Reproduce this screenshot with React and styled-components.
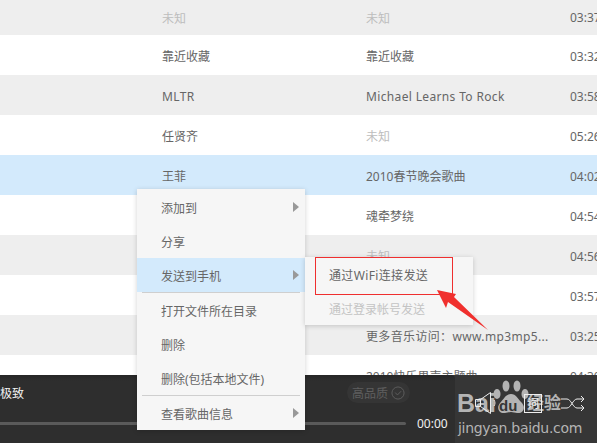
import React from 'react'
import styled, { createGlobalStyle } from 'styled-components'

const GlobalStyle = createGlobalStyle`
  html, body {
    margin: 0;
    padding: 0;
    background: #fff;
  }
`

const Page = styled.div`
  width: 597px;
  height: 443px;
  position: relative;
  overflow: hidden;
  display: flex;
  flex-direction: column;
  font-family: "Noto Sans", "Noto Sans CJK SC", sans-serif;
  font-size: 12px;
`

const SongList = styled.div`
  height: 375px;
  overflow: hidden;
  flex-shrink: 0;
`

const Row = styled.div`
  height: 40px;
  padding-top: 2px;
  box-sizing: border-box;
  display: grid;
  grid-template-columns: 162px 204px 204px 60px;
  align-items: center;
  color: #666;
  white-space: nowrap;
  background: ${props => props.selected ? '#d3eafc' : props.even ? '#eeeeee' : '#ffffff'};
  &:first-child {
    height: 35px;
    padding-top: 0;
  }
`

const Cell = styled.div`
  grid-column: ${props => props.col};
  color: ${props => props.unknown ? '#bdbdbd' : 'inherit'};
  letter-spacing: ${props => props.wide ? '0.35px' : 'normal'};
`

const Player = styled.div`
  flex: 1;
  display: flex;
  background: #363636;
`

const PlayerMain = styled.div`
  width: 455px;
  flex-shrink: 0;
  display: flex;
  flex-direction: column;
  background: linear-gradient(#262626, #2e2e2e 6px);
  border-radius: 0 4px 0 0;
  padding-top: 7px;
  box-sizing: border-box;
`

const TitleRow = styled.div`
  height: 21px;
  display: flex;
  align-items: center;
  justify-content: space-between;
  padding-right: 45px;
  color: #f2f2f2;
`

const QualityPill = styled.div`
  width: 63px;
  height: 21px;
  border-radius: 11px;
  background: #353535;
  color: #5f5f5f;
  display: flex;
  align-items: center;
  justify-content: center;
  gap: 3px;
  box-sizing: border-box;
`

const ProgressRow = styled.div`
  margin-top: 10px;
  height: 20px;
  display: flex;
  align-items: center;
  gap: 11px;
  color: #f0f0f0;
`

const ProgressBar = styled.div`
  width: 406px;
  height: 3px;
  background: #5a5a5a;
  border-radius: 0 2px 2px 0;
`

const PlayerControls = styled.div`
  flex: 1;
  display: flex;
  align-items: center;
  padding: 0 12px 12px 20px;
  justify-content: space-between;
  position: relative;
  z-index: 1;
`

const LyricButton = styled.div`
  width: 16px;
  height: 17px;
  border: 1px solid #eee;
  color: #eee;
  font-size: 12px;
  line-height: 17px;
  text-align: center;
  margin-left: 6px;
`

const ContextMenu = styled.div`
  position: absolute;
  left: ${props => props.x}px;
  top: ${props => props.y}px;
  width: 168px;
  padding: ${props => props.sub ? 0 : '1px'} 0 0;
  background: #f6f6f6;
  box-shadow: 0 1px 5px rgba(0, 0, 0, 0.18);
  box-sizing: border-box;
  z-index: 2;
`

const MenuItem = styled.div`
  height: 34px;
  display: flex;
  align-items: center;
  justify-content: space-between;
  padding: 2px 6px 0 24px;
  box-sizing: border-box;
  color: ${props => props.disabled ? '#c4c4c4' : '#666'};
  background: ${props => props.active ? '#d3eafc' : 'transparent'};
  letter-spacing: ${props => props.wide ? '0.35px' : 'normal'};
  white-space: nowrap;
`

const Arrow = styled.span`
  width: 0;
  height: 0;
  margin-top: -2px;
  border-left: 6px solid #999;
  border-top: 5px solid transparent;
  border-bottom: 5px solid transparent;
`

const Separator = styled.div`
  height: 1px;
  margin: 0 5px;
  background: #cfcfcf;
`

const RedFrame = styled.div`
  position: absolute;
  left: 315px;
  top: 257px;
  width: 136px;
  height: 36px;
  border: 1px solid #ef2f2f;
  z-index: 3;
`

const RedArrow = styled.svg`
  position: absolute;
  left: 430px;
  top: 285px;
  z-index: 3;
`

const Watermark = styled.div`
  position: absolute;
  left: 457px;
  top: 380px;
  width: 112px;
  height: 58px;
  color: #b4b4b4;
`

const WatermarkBai = styled.span`
  position: absolute;
  left: 0;
  top: 8px;
  font: bold 25px/30px "Liberation Sans", sans-serif;
`

const WatermarkDu = styled.span`
  position: absolute;
  left: 42px;
  top: 17px;
  font: bold 15px/18px "Liberation Sans", sans-serif;
  color: #363636;
`

const WatermarkCn = styled.span`
  position: absolute;
  left: 70px;
  top: 10px;
  font: bold 17px/24px "Noto Sans CJK SC", sans-serif;
`

const WatermarkUrl = styled.span`
  position: absolute;
  left: 1px;
  top: 39px;
  font: 14px/18px "DejaVu Sans", sans-serif;
  letter-spacing: -0.3px;
  white-space: nowrap;
`

const PawIcon = styled.svg`
  position: absolute;
  left: 33px;
  top: 0;
`

const UNKNOWN = '未知'

const songs = [
  { artist: UNKNOWN, album: UNKNOWN, time: '03:37' },
  { artist: '靠近收藏', album: '靠近收藏', time: '03:32' },
  { artist: 'MLTR', album: 'Michael Learns To Rock', time: '03:58', wide: true },
  { artist: '任贤齐', album: UNKNOWN, time: '05:26' },
  { artist: '王菲', album: '2010春节晚会歌曲', time: '04:02', selected: true },
  { artist: '', album: '魂牵梦绕', time: '04:54' },
  { artist: '', album: UNKNOWN, time: '04:56' },
  { artist: '', album: '', time: '03:57' },
  { artist: '', album: '更多音乐访问：www.mp3mp5...', time: '03:25', wide: true },
  { artist: '', album: '2010快乐男声主题曲', time: '04:30' },
]

const App = () => (
  <Page>
    <GlobalStyle />
    <SongList>
      {songs.map((song, i) => (
        <Row key={i} even={i % 2 === 0} selected={song.selected}>
          <Cell col={2} wide={song.wide} unknown={song.artist === UNKNOWN}>{song.artist}</Cell>
          <Cell col={3} wide={song.wide} unknown={song.album === UNKNOWN}>{song.album}</Cell>
          <Cell col={4}>{song.time}</Cell>
        </Row>
      ))}
    </SongList>

    <Player>
      <PlayerMain>
        <TitleRow>
          <span>极致</span>
          <QualityPill>
            高品质
            <svg width="14" height="14" viewBox="0 0 15 15" fill="none" stroke="#5f5f5f" strokeWidth="1">
              <circle cx="7.5" cy="7.5" r="6.5" />
              <path d="M4.5 7l2.4 2.6L10.8 5.6" />
            </svg>
          </QualityPill>
        </TitleRow>
        <ProgressRow>
          <ProgressBar />
          <span>00:00</span>
        </ProgressRow>
      </PlayerMain>
      <PlayerControls>
        <svg width="24" height="24" viewBox="0 0 24 24" fill="none" stroke="#eee" strokeWidth="1">
          <path d="M0.5 8.5h5v7h-5zM5.500 8.500L15.500 1.500v21L5.500 15.500" />
          <path d="M19 9c1.300 2 1.300 4 0 6" />
        </svg>
        <LyricButton>词</LyricButton>
        <svg width="24" height="15" viewBox="0 0 24 15" fill="none" stroke="#eee" strokeWidth="1">
          <path d="M0 3h6c4 0 6 9 10 9h7M0 12h6c4 0 6-9 10-9h7" />
          <path d="M20 0l3 3-3 3M20 9l3 3-3 3" />
        </svg>
      </PlayerControls>
    </Player>

    <ContextMenu x={137} y={189}>
      <MenuItem>添加到<Arrow /></MenuItem>
      <MenuItem>分享</MenuItem>
      <MenuItem active>发送到手机<Arrow /></MenuItem>
      <Separator />
      <MenuItem>打开文件所在目录</MenuItem>
      <MenuItem>删除</MenuItem>
      <MenuItem>删除(包括本地文件)</MenuItem>
      <Separator />
      <MenuItem>查看歌曲信息<Arrow /></MenuItem>
    </ContextMenu>

    <ContextMenu x={305} y={257} sub>
      <MenuItem wide>通过WiFi连接发送</MenuItem>
      <MenuItem disabled>通过登录帐号发送</MenuItem>
    </ContextMenu>

    <RedFrame />
    <RedArrow width="62" height="50" viewBox="430 285 62 50">
      <polygon points="437,290 456,294 454,297 488,330 448,302 446,308" fill="#f0302e" />
    </RedArrow>

    <Watermark>
      <PawIcon width="44" height="40" viewBox="0 0 44 40" fill="#b4b4b4">
        <ellipse cx="7" cy="14" rx="3.500" ry="5" />
        <ellipse cx="16" cy="6" rx="3.500" ry="5.500" />
        <ellipse cx="27" cy="6" rx="3.500" ry="5.500" />
        <ellipse cx="35" cy="14" rx="3.500" ry="5" />
        <path d="M21 14c5 0 7 5 11 9 4 5 1 11-5 10-2 0-4-1-6-1s-4 1-6 1c-6 1-9-5-5-10 4-4 6-9 11-9z" />
      </PawIcon>
      <WatermarkBai>Bai</WatermarkBai>
      <WatermarkDu>du</WatermarkDu>
      <WatermarkCn>经验</WatermarkCn>
      <WatermarkUrl>jingyan.baidu.com</WatermarkUrl>
    </Watermark>
  </Page>
)

export default App
